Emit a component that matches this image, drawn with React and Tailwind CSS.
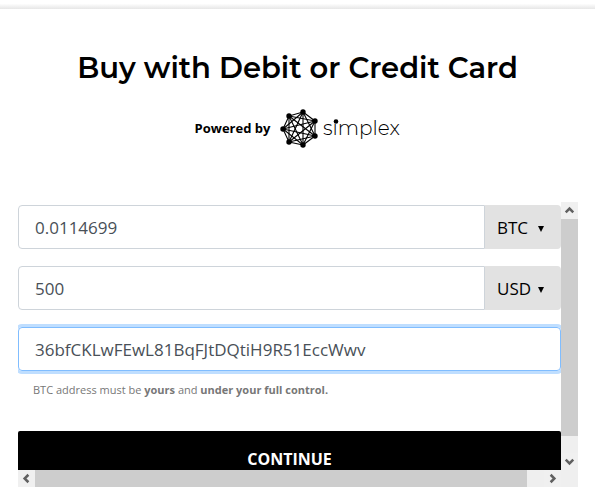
import { useState } from 'react';
import { ChevronDown, ChevronLeft, ChevronRight, ChevronUp } from 'lucide-react';

const NODES = [[25, 4], [37, 13], [37, 28], [25, 37], [11, 34], [5, 21], [11, 8]];

export default function App() {
  const [amount, setAmount] = useState('0.0114699');
  const [price, setPrice] = useState('500');
  const [address, setAddress] = useState('36bfCKLwFEwL81BqFJtDQtiH9R51EccWwv');

  return (
    <main className="bg-white font-['Open_Sans',sans-serif] text-black">
      <div className="h-[9px] bg-linear-to-b from-white from-40% to-[#e6e6e6]" />

      <header className="flex flex-col items-center pt-[39px]">
        <h1 className="font-['Montserrat','Inter',sans-serif] text-[29px] leading-10 font-semibold whitespace-nowrap">
          Buy with Debit or Credit Card
        </h1>
        <div className="flex items-center gap-2 mt-[21px] h-10">
          <span className="text-[13px] font-bold">Powered by</span>
          <SimplexLogo />
        </div>
      </header>

      <div className="mt-[53px] pl-[18px] pr-[17px]">
        <div className="flex">
          <form className="flex-1 min-w-0 h-[268px] overflow-hidden pt-[3px]" onSubmit={(e) => e.preventDefault()}>
            <AmountRow label="Crypto amount" value={amount} onChange={setAmount} unit="BTC" units={['BTC', 'ETH', 'LTC']} />
            <AmountRow label="Fiat amount" value={price} onChange={setPrice} unit="USD" units={['USD', 'EUR']} />
            <input aria-label="BTC address" value={address} onChange={(e) => setAddress(e.target.value)}
              className="block w-full h-11 rounded border border-[#80bdff] px-4 text-[17px] text-[#495057] outline-none ring-3 ring-[#bfdeff]" />
            <p className="mt-[11px] px-[15px] text-[11px] leading-4 text-[#777]">
              BTC address must be <b>yours</b> and <b>under your full control.</b>
            </p>
            <button className="block w-full h-14 mt-[33px] rounded-xs bg-black text-white text-base font-bold">CONTINUE</button>
          </form>
          <div className="flex flex-col w-[17px] bg-[#efefef]">
            <ScrollArrow icon={ChevronUp} label="Scroll up" />
            <div className="h-[217px] bg-[#cdcdcd]" />
            <div className="flex-1" />
            <ScrollArrow icon={ChevronDown} label="Scroll down" />
          </div>
        </div>
        <div className="flex bg-[#efefef] pr-[17px]">
          <ScrollArrow icon={ChevronLeft} label="Scroll left" />
          <div className="flex-1 bg-[#cdcdcd]" />
          <div className="w-[17px]" />
          <ScrollArrow icon={ChevronRight} label="Scroll right" />
        </div>
      </div>
    </main>
  );
}

function AmountRow({ label, value, onChange, unit, units }) {
  return (
    <div className="flex h-11 mb-[17px]">
      <input aria-label={label} value={value} onChange={(e) => onChange(e.target.value)}
        className="flex-1 min-w-0 rounded-l border border-[#ced4da] px-4 pt-[2px] text-[17px] text-[#495057] outline-none" />
      <div className="relative w-[76px]">
        <select aria-label={label + ' currency'} defaultValue={unit}
          className="appearance-none w-full h-full rounded-r bg-[#e2e2e2] pl-3 pt-[2px] text-[17px] outline-none">
          {units.map((u) => <option key={u}>{u}</option>)}
        </select>
        <svg viewBox="0 0 6 6" className="absolute right-[17px] top-[21px] size-[6px] pointer-events-none">
          <path d="M0 0h6L3 6z" />
        </svg>
      </div>
    </div>
  );
}

function ScrollArrow({ icon: Icon, label }) {
  return (
    <button aria-label={label} className="grid place-items-center size-[17px] shrink-0 bg-[#f0f0f0] text-[#606060]">
      <Icon size={15} strokeWidth={4} strokeLinecap="butt" strokeLinejoin="miter" />
    </button>
  );
}

function SimplexLogo() {
  return (
    <svg width="122" height="42" viewBox="0 0 122 42" role="img" aria-label="simplex">
      <g stroke="#000" strokeWidth="1.1">
        {NODES.map(([x1, y1], i) => NODES.slice(i + 1).map(([x2, y2], j) => (
          <line key={i + '-' + j} x1={x1} y1={y1} x2={x2} y2={y2} />
        )))}
      </g>
      {NODES.map(([x, y]) => <circle key={x + '-' + y} cx={x} cy={y} r="2.7" />)}
      <text x="45" y="27" fontSize="20" fontWeight="300" fontFamily="Montserrat, Lato, sans-serif">simplex</text>
      <circle cx="58" cy="13.5" r="2.3" />
    </svg>
  );
}
